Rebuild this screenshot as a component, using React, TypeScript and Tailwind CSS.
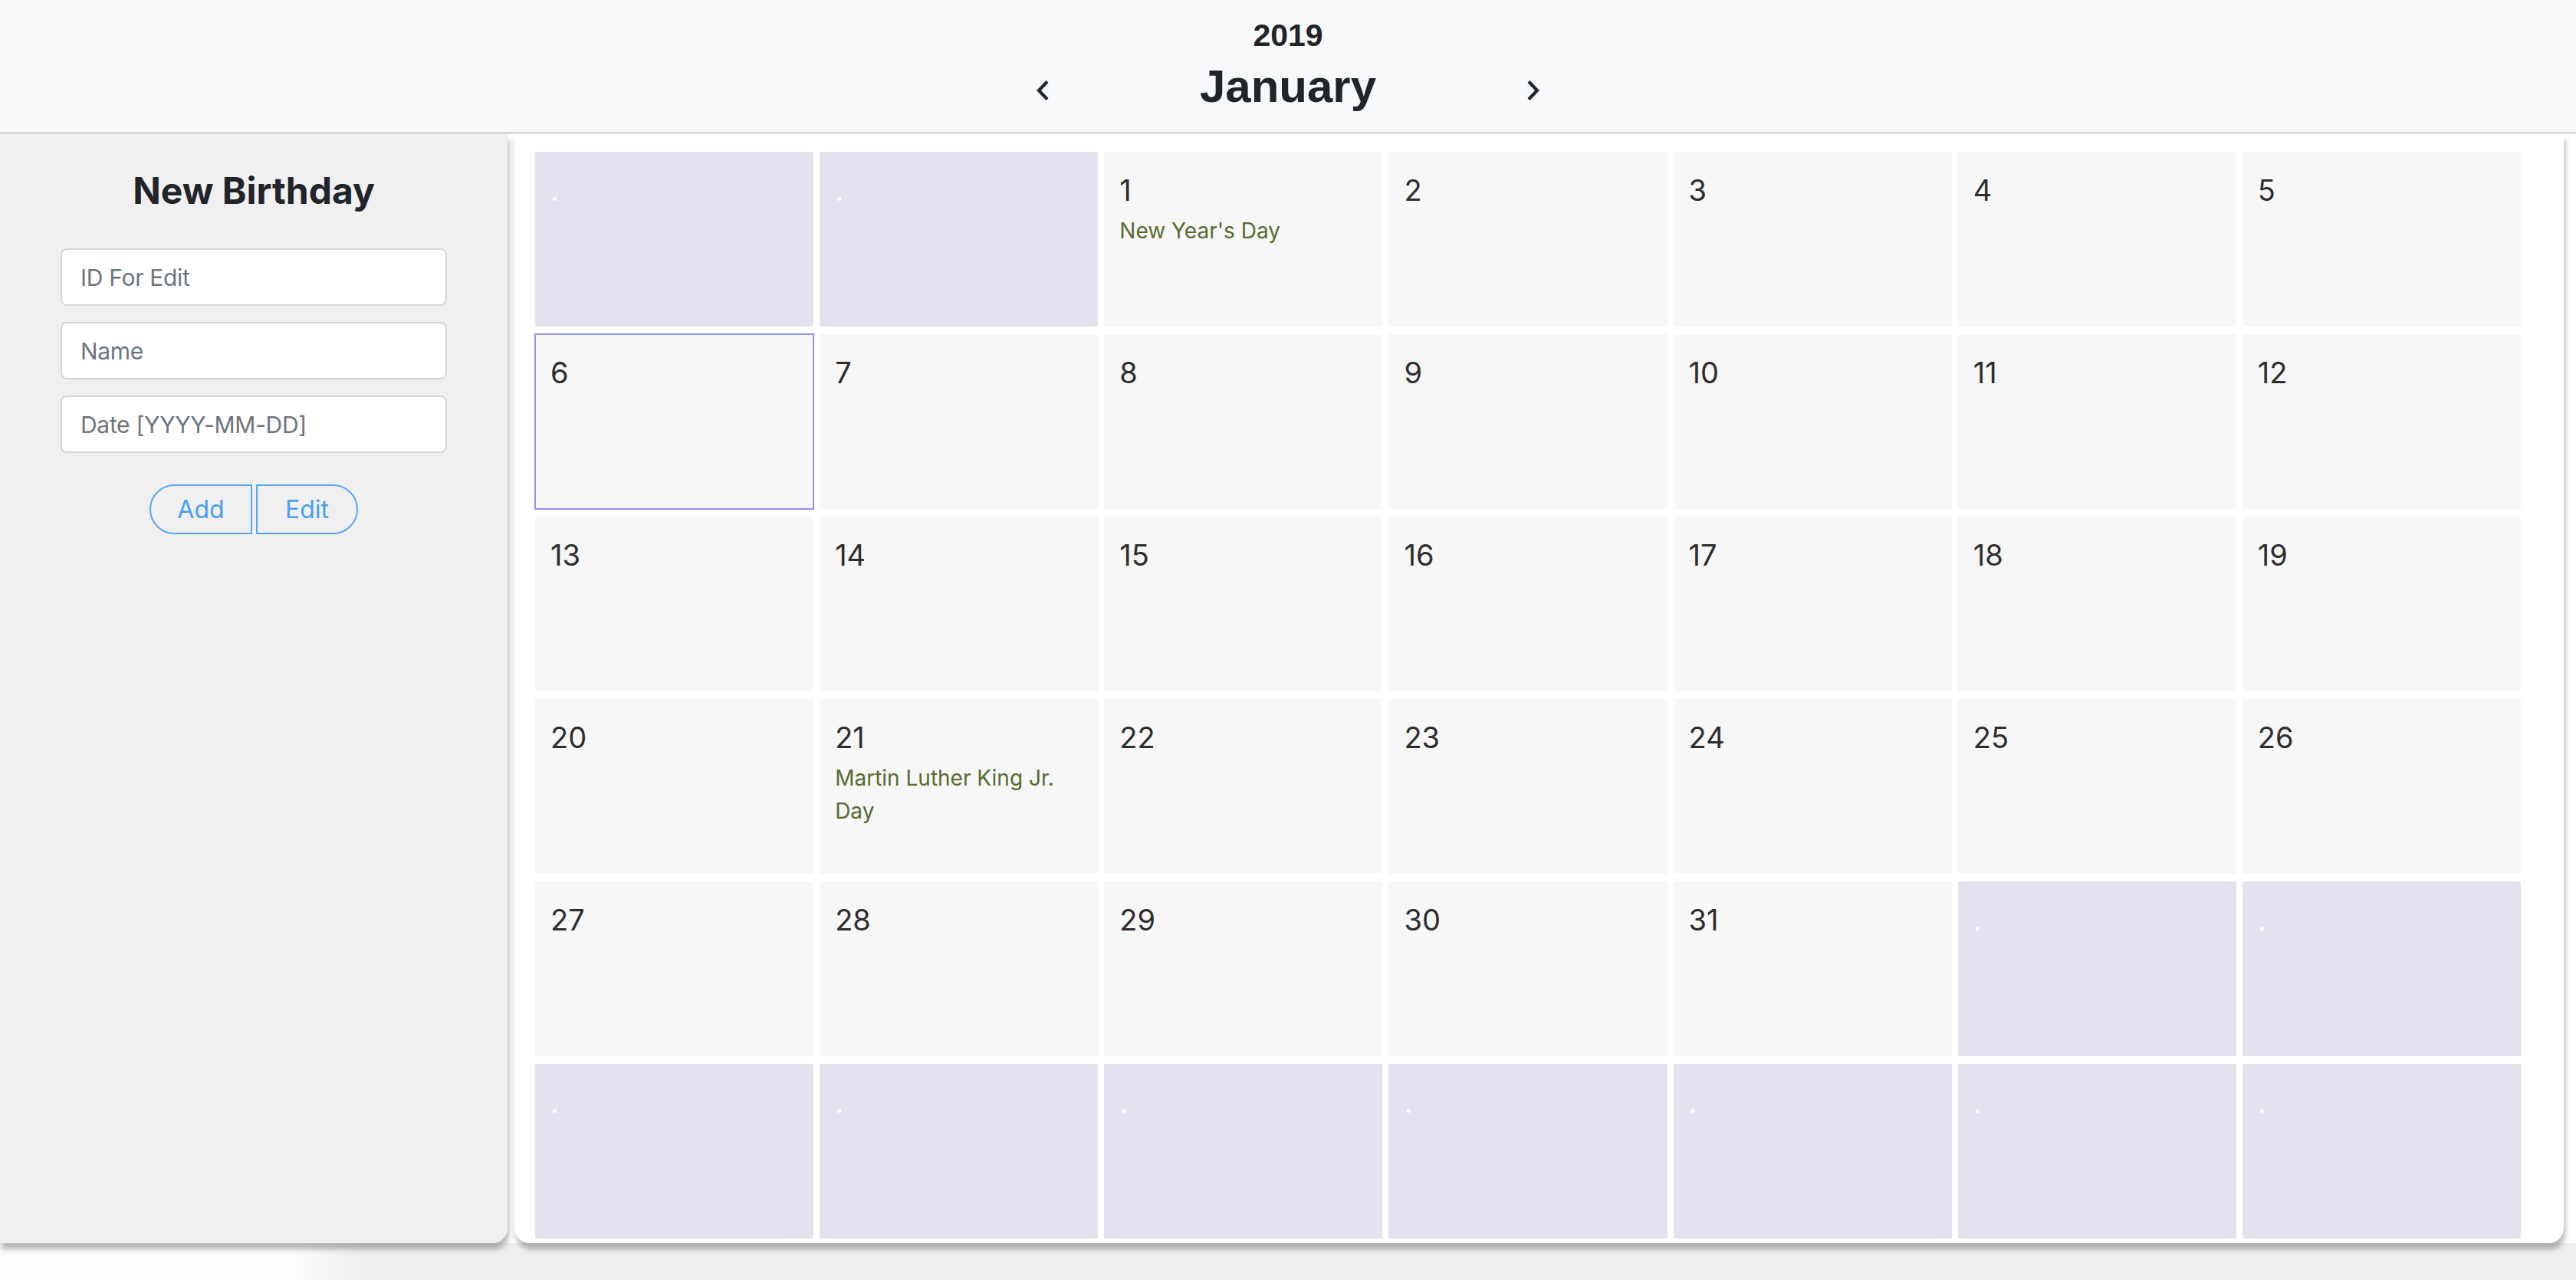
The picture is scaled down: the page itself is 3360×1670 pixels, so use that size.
import React from "react";

const holidays: Record<number, string> = {
  1: "New Year's Day",
  21: "Martin Luther King Jr. Day",
};

const cells: (number | null)[] = [
  null,
  null,
  ...Array.from({ length: 31 }, (_, i) => i + 1),
  ...Array.from({ length: 9 }, () => null),
];

function Chevron({ dir }: { dir: "left" | "right" }) {
  return (
    <svg width="16" height="26" viewBox="0 0 16 26" className="mt-[9px] shrink-0">
      <polyline
        points={dir === "left" ? "14,1.5 3,13 14,24.5" : "2,1.5 13,13 2,24.5"}
        fill="none"
        stroke="#212529"
        strokeWidth="4.2"
        strokeLinejoin="miter"
      />
    </svg>
  );
}

function Field({ placeholder, first }: { placeholder: string; first?: boolean }) {
  return (
    <input
      placeholder={placeholder}
      className={`${first ? "mt-[46px]" : "mt-[21px]"} w-[504px] h-[75px] rounded-[8px] border-2 border-[#d3d6da] bg-white px-[24px] text-[30px] tracking-[-0.3px] text-[#495057] placeholder:text-[#6c757d] outline-none font-['Inter',sans-serif]`}
    />
  );
}

export default function App() {
  return (
    <div className="w-[3360px] h-[1670px] overflow-hidden bg-white flex flex-col font-['Inter',sans-serif]">
      <header className="h-[175px] shrink-0 bg-[#f8f9fa] border-b-[3px] border-[#dcdcdc] flex flex-col items-center text-[#212529] font-['Liberation_Sans',Arial,sans-serif] font-bold">
        <div className="mt-[22px] text-[41px] leading-[48px]">2019</div>
        <div className="mt-[7px] flex items-center">
          <Chevron dir="left" />
          <div className="w-[624px] text-center text-[60px] leading-[72px]">January</div>
          <Chevron dir="right" />
        </div>
      </header>

      <div className="flex h-[1447px] shrink-0">
        <aside className="relative z-10 w-[662px] shrink-0 bg-[#f0f0f0] rounded-br-[20px] shadow-[2px_8px_7px_rgba(0,0,0,0.28)] flex flex-col items-center">
          <h3 className="mt-[45px] text-[48px] leading-[58px] font-bold text-[#212529]">New Birthday</h3>
          <Field placeholder="ID For Edit" first />
          <Field placeholder="Name" />
          <Field placeholder="Date [YYYY-MM-DD]" />
          <div className="mt-[41px] flex gap-[5px]">
            <button className="w-[134px] h-[65px] border-2 border-[#58a5f5] rounded-l-[33px] text-[32px] text-[#4b9ef2] bg-transparent">
              Add
            </button>
            <button className="w-[133px] h-[65px] border-2 border-[#58a5f5] rounded-r-[33px] text-[32px] text-[#4b9ef2] bg-transparent">
              Edit
            </button>
          </div>
        </aside>

        <main className="relative z-10 ml-[9px] w-[2673px] shrink-0 bg-white rounded-b-[20px] shadow-[2px_8px_7px_rgba(0,0,0,0.28)] pl-[27px] pr-[56px] pt-[23px] pb-[6px]">
          <div className="grid h-full grid-cols-7 grid-rows-6 gap-x-[8px] gap-y-[10px]">
            {cells.map((d, i) =>
              d === null ? (
                <div key={i} className="bg-[#e3e3ef] px-[20px] pt-[20px]">
                  <div className="text-[38px] leading-[60px] text-white">.</div>
                </div>
              ) : (
                <div
                  key={i}
                  className={`bg-[#f7f7f7] px-[20px] pt-[20px] ${
                    d === 6 ? "outline-2 outline-solid outline-[#9393f0] -outline-offset-1" : ""
                  }`}
                >
                  <div className="text-[38px] leading-[60px] text-[#2d2d2d]">{d}</div>
                  {holidays[d] && (
                    <div className="mt-[2px] text-[28px] leading-[43px] text-[#556b2f]">{holidays[d]}</div>
                  )}
                </div>
              )
            )}
          </div>
        </main>
      </div>

      <div className="flex-1 bg-[linear-gradient(to_right,#fdfdfd_380px,#efefef_470px)]" />
    </div>
  );
}
